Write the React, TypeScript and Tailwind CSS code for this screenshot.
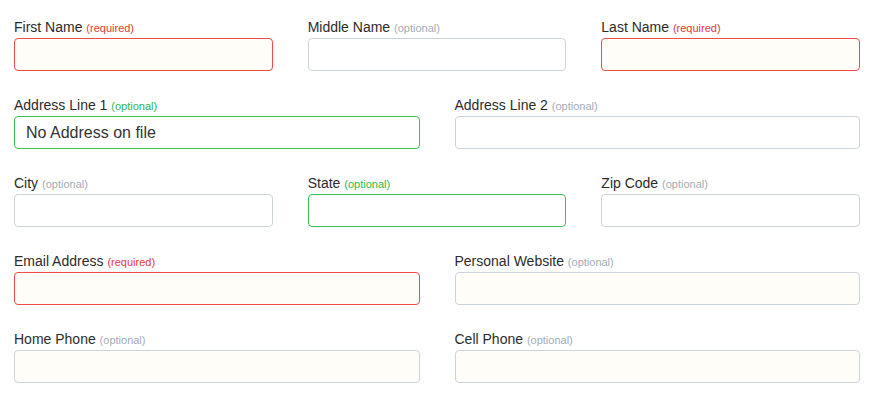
type Status = "required" | "optional" | "valid";

type Field = {
  label: string;
  status: Status;
  tone: "red" | "green" | "gray";
  filled?: boolean;
  value?: string;
};

const rows: Field[][] = [
  [
    { label: "First Name", status: "required", tone: "red", filled: true },
    { label: "Middle Name", status: "optional", tone: "gray" },
    { label: "Last Name", status: "required", tone: "red", filled: true },
  ],
  [
    { label: "Address Line 1", status: "valid", tone: "green", value: "No Address on file" },
    { label: "Address Line 2", status: "optional", tone: "gray" },
  ],
  [
    { label: "City", status: "optional", tone: "gray" },
    { label: "State", status: "valid", tone: "green" },
    { label: "Zip Code", status: "optional", tone: "gray" },
  ],
  [
    { label: "Email Address", status: "required", tone: "red", filled: true },
    { label: "Personal Website", status: "optional", tone: "gray", filled: true },
  ],
  [
    { label: "Home Phone", status: "optional", tone: "gray", filled: true },
    { label: "Cell Phone", status: "optional", tone: "gray", filled: true },
  ],
];

function FormField({ field }: { field: Field }) {
  const hint =
    field.status === "required"
      ? "text-[#e53935]"
      : field.status === "valid"
        ? "text-[#2eb84b]"
        : "text-[#a3acb6]";
  const border =
    field.tone === "red"
      ? "border-[#ee4b4b]"
      : field.tone === "green"
        ? "border-[#3cbf55]"
        : "border-[#ccd3db]";
  return (
    <div className="flex flex-col">
      <label className="mb-px h-5 text-[14px] leading-5 text-[#2b2b2b]">
        {field.label}{" "}
        <span className={`text-[11px] ${hint}`}>
          {field.status === "required" ? "(required)" : "(optional)"}
        </span>
      </label>
      <input
        readOnly
        value={field.value ?? ""}
        className={`h-[33px] w-full rounded-[4px] border px-[11px] text-[16px] text-[#333] outline-none ${border} ${
          field.filled ? "bg-[#fffdf8]" : "bg-white"
        }`}
      />
    </div>
  );
}

export default function App() {
  return (
    <div
      className="min-h-screen bg-white pb-4 pl-[14px] pr-[17px] pt-[17px]"
      style={{ fontFamily: '"Liberation Sans", Arial, sans-serif' }}
    >
      <div className="flex flex-col gap-6">
        {rows.map((row, i) => (
          <div
            key={i}
            className={`grid gap-x-[35px] ${row.length === 3 ? "grid-cols-3" : "grid-cols-2"}`}
          >
            {row.map((f) => (
              <FormField key={f.label} field={f} />
            ))}
          </div>
        ))}
      </div>
    </div>
  );
}
